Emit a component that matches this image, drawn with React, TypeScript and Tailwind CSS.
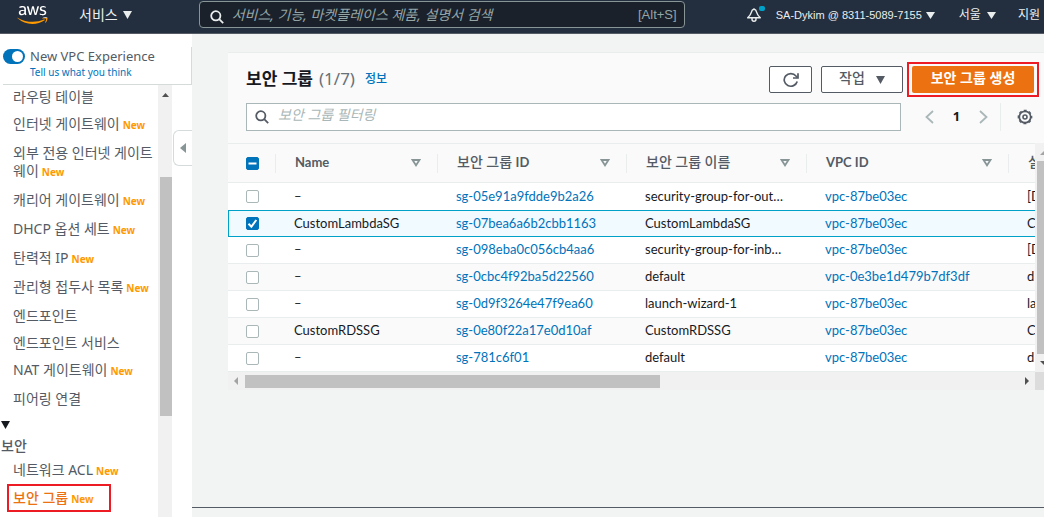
import React from 'react';
import { FaAws } from 'react-icons/fa';

type NavItem = { label: string; isNew?: boolean };

const navItems: NavItem[] = [
  { label: '라우팅 테이블' },
  { label: '인터넷 게이트웨이', isNew: true },
  { label: '외부 전용 인터넷 게이트웨이', isNew: true },
  { label: '캐리어 게이트웨이', isNew: true },
  { label: 'DHCP 옵션 세트', isNew: true },
  { label: '탄력적 IP', isNew: true },
  { label: '관리형 접두사 목록', isNew: true },
  { label: '엔드포인트' },
  { label: '엔드포인트 서비스' },
  { label: 'NAT 게이트웨이', isNew: true },
  { label: '피어링 연결' },
];

const rows = [
  { name: '–', id: 'sg-05e91a9fdde9b2a26', group: 'security-group-for-out…', vpc: 'vpc-87be03ec', desc: '[D' },
  { name: 'CustomLambdaSG', id: 'sg-07bea6a6b2cbb1163', group: 'CustomLambdaSG', vpc: 'vpc-87be03ec', desc: 'C', selected: true },
  { name: '–', id: 'sg-098eba0c056cb4aa6', group: 'security-group-for-inb…', vpc: 'vpc-87be03ec', desc: '[D' },
  { name: '–', id: 'sg-0cbc4f92ba5d22560', group: 'default', vpc: 'vpc-0e3be1d479b7df3df', desc: 'd' },
  { name: '–', id: 'sg-0d9f3264e47f9ea60', group: 'launch-wizard-1', vpc: 'vpc-87be03ec', desc: 'la' },
  { name: 'CustomRDSSG', id: 'sg-0e80f22a17e0d10af', group: 'CustomRDSSG', vpc: 'vpc-87be03ec', desc: 'C' },
  { name: '–', id: 'sg-781c6f01', group: 'default', vpc: 'vpc-87be03ec', desc: 'd' },
];

const columns = [
  { korean: '', latin: 'Name' },
  { korean: '보안 그룹', latin: 'ID' },
  { korean: '보안 그룹 이름', latin: '' },
  { korean: '', latin: 'VPC ID' },
];

function Caret({ className = '' }: { className?: string }) {
  return (
    <svg viewBox="0 0 9 8" preserveAspectRatio="none" className={`shrink-0 ${className}`} aria-hidden="true">
      <path d="M0 0h9L4.5 8z" fill="currentColor" />
    </svg>
  );
}

function SearchIcon({ className = '' }: { className?: string }) {
  return (
    <svg viewBox="0 0 14 14" className={`size-3.5 shrink-0 ${className}`} fill="none" stroke="currentColor" strokeWidth="1.8" aria-hidden="true">
      <circle cx="5.8" cy="5.8" r="4.6" />
      <path d="M9.2 9.2l4 4" />
    </svg>
  );
}

function NewBadge() {
  return <span className="ml-[3px] text-[10px] font-bold leading-none text-[#ff9900]">New</span>;
}

function Header() {
  return (
    <header className="flex h-[34px] shrink-0 items-start border-b border-[#545b64] bg-[#232f3e] pl-[17px] pr-1 text-[#eaeded]">
      <a href="#home" aria-label="AWS" className="mt-[3px]">
        <svg width="0" height="0" className="absolute" aria-hidden="true">
          <linearGradient id="logo" gradientUnits="userSpaceOnUse" x1="0" y1="0" x2="0" y2="512">
            <stop offset="0.645" stopColor="#fff" />
            <stop offset="0.645" stopColor="#ff9900" />
          </linearGradient>
        </svg>
        <FaAws className="h-6 w-[31px]" fill="url(#logo)" />
      </a>
      <button className="ml-[31px] flex h-7 items-center gap-[5px] text-[14px]">
        서비스
        <Caret className="mt-0.5 h-2 w-[9px]" />
      </button>
      <label className="ml-[67px] mt-px flex h-[27px] w-[486px] items-center rounded-sm border border-[#879596] bg-[#1a212b] pl-2.5 pr-[7px]">
        <SearchIcon className="mt-1" />
        <input
          aria-label="검색"
          placeholder="서비스, 기능, 마켓플레이스 제품, 설명서 검색"
          className="ml-2 min-w-0 flex-1 bg-transparent text-[14px] italic outline-none placeholder:text-[#95a5a6]"
        />
        <span className="font-['Liberation_Sans',sans-serif] text-[13px] text-[#95a5a6]">[Alt+S]</span>
      </label>
      <div className="ml-auto flex h-[30px] items-center text-[12px]">
        <button aria-label="알림" className="relative mr-[15px]">
          <svg viewBox="0 0 14 14" className="size-3.5" fill="none" stroke="currentColor" strokeWidth="1.4" strokeLinejoin="round" aria-hidden="true">
            <path d="M7 1C5.500 1.500 4.600 2.700 4.200 4.700 3.800 6.600 2.700 8 .7 9.800h12.600C11.300 8 10.200 6.600 9.800 4.700 9.400 2.700 8.500 1.500 7 1z" />
            <path d="M5 10v1.300q0 1.900 2 1.900t2-1.900V10" />
          </svg>
          <span className="absolute -right-1 -top-0.5 h-[5px] w-1.5 rounded-xs bg-[#00a1c9]" />
        </button>
        <button className="mr-6 flex items-center gap-1 whitespace-nowrap font-['Liberation_Sans',sans-serif] text-[11px]">
          SA-Dykim @ 8311-5089-7155
          <Caret className="h-[7px] w-[9px]" />
        </button>
        <button className="mr-[22px] flex items-center gap-1.5 whitespace-nowrap">
          서울
          <Caret className="h-[7px] w-[9px]" />
        </button>
        <button className="whitespace-nowrap">지원</button>
      </div>
    </header>
  );
}

function Sidebar() {
  return (
    <aside className="flex w-48 shrink-0 flex-col bg-white pt-[13px] text-[#545b64]">
      <div className="ml-[3px] flex h-[38px] shrink-0 gap-[5px] border-b border-r border-[#d5dbdb]">
        <label className="relative mt-0.5 h-[15px] w-[22px] shrink-0 rounded-full bg-[#0073bb]">
          <input type="checkbox" role="switch" defaultChecked aria-label="New VPC Experience" className="absolute inset-0 opacity-0" />
          <span className="absolute right-0.5 top-0.5 size-[11px] rounded-full bg-white" />
        </label>
        <div className="whitespace-nowrap">
          <div className="text-[13px] leading-[18px]">New VPC Experience</div>
          <a href="#feedback" className="block text-[10px] leading-[14px] text-[#0073bb]">Tell us what you think</a>
        </div>
      </div>
      <div className="flex min-h-0 flex-1">
        <nav className="w-[158px] overflow-hidden break-all text-[14px] leading-[18px]">
          <ul className="pl-[13px] pt-[3px]">
            {navItems.map((item) => (
              <li key={item.label} className={item.isNew ? 'mb-[11px]' : 'mb-[9px]'}>
                <a href="#nav">{item.label}{item.isNew && <NewBadge />}</a>
              </li>
            ))}
          </ul>
          <button className="block w-full pl-px text-left font-medium" aria-expanded="true">
            <Caret className="mb-2 mt-1 h-2 w-[9px] text-[#16191f]" />
            <span className="mb-1.5 block">보안</span>
          </button>
          <ul className="pl-[13px]">
            <li className="mb-2.5"><a href="#acl">네트워크 ACL<NewBadge /></a></li>
            <li>
              <a href="#sg" aria-current="page" className="relative block w-[92px] font-medium text-[#ec7211]">
                보안 그룹<NewBadge />
                <span className="absolute -inset-x-1.5 -inset-y-[5px] border-2 border-[#ed1c24]" />
              </a>
            </li>
          </ul>
        </nav>
        <div className="w-3.5 bg-[#f1f1f1]">
          <Caret className="mx-auto mt-2 h-1 w-[7px] rotate-180 text-[#505050]" />
          <div className="ml-0.5 mt-20 h-[239px] bg-[#c1c1c1]" />
        </div>
        <button aria-label="탐색 닫기" className="ml-px mt-[45px] flex h-9 flex-1 items-center rounded-l-md border border-r-0 border-[#d5dbdb] pl-1.5">
          <svg viewBox="0 0 6 10" className="h-2.5 w-1.5 text-[#879596]"><path d="M6 0v10L0 5z" fill="currentColor" /></svg>
        </button>
      </div>
    </aside>
  );
}

function Toolbar() {
  return (
    <div className="bg-[#fafafa] pl-[18px] pr-2.5 pt-[13px]">
      <div className="flex h-[27px] items-center">
        <h1 className="flex items-center whitespace-nowrap pb-0.5 text-[17px] font-bold leading-6 text-[#16191f]">
          보안 그룹
          <span className="ml-1.5 font-normal text-[#687078]">(1/7)</span>
          <a href="#info" className="ml-2.5 text-[12px] font-medium text-[#0073bb]">정보</a>
        </h1>
        <button aria-label="새로 고침" className="ml-auto flex h-[27px] w-[43px] items-center justify-center rounded-xs border border-[#545b64] bg-white text-[#545b64]">
          <svg viewBox="0 0 16 16" className="size-4" fill="none" stroke="currentColor" strokeWidth="1.700">
            <path d="M14.200 9.500A6.600 6.300 0 1 1 13 4L14.500 5.700" />
            <path d="M15 1.200V6H10" />
          </svg>
        </button>
        <button className="ml-[9px] flex h-[27px] w-[82px] items-center justify-center gap-[11px] rounded-xs border border-[#545b64] bg-white pb-1 text-[14px] font-medium text-[#545b64]">
          작업
          <Caret className="mt-1 h-2 w-[9px]" />
        </button>
        <button className="relative ml-[9px] h-[27px] w-[122px] rounded-xs bg-[#ec7211] pb-1 text-[14px] font-bold leading-[22px] text-white">
          보안 그룹 생성
          <span className="absolute -inset-x-[5px] -inset-y-1 border-2 border-[#ed1c24]" />
        </button>
      </div>
      <div className="flex items-center pb-3 pr-px pt-2.5">
        <label className="flex h-7 flex-1 items-center gap-[9px] border border-[#aab7b8] bg-white pl-2">
          <SearchIcon className="text-[#545b64]" />
          <input aria-label="보안 그룹 필터링" placeholder="보안 그룹 필터링" className="min-w-0 flex-1 pb-1 text-[14px] italic leading-5 outline-none placeholder:text-[#aab7b8]" />
        </label>
        <button aria-label="이전 페이지" className="ml-6 text-[#aab7b8]">
          <svg viewBox="0 0 9 14" className="h-3.5 w-[9px]" fill="none" stroke="currentColor" strokeWidth="1.800"><path d="M8 1L1.500 7 8 13" /></svg>
        </button>
        <button className="w-[45px] text-center text-[13px] font-bold text-[#16191f]">1</button>
        <button aria-label="다음 페이지" className="text-[#aab7b8]">
          <svg viewBox="0 0 9 14" className="h-3.5 w-[9px]" fill="none" stroke="currentColor" strokeWidth="1.800"><path d="M1 1l6.500 6L1 13" /></svg>
        </button>
        <span className="ml-3 h-7 w-px bg-[#eaeded]" />
        <button aria-label="설정" className="ml-4 text-[#545b64]">
          <svg viewBox="0 0 16 16" className="size-4" fill="none" stroke="currentColor">
            <circle cx="8" cy="8" r="5.700" strokeWidth="1.700" />
            <circle cx="8" cy="8" r="2" strokeWidth="1.600" />
            <circle cx="8" cy="8" r="6.700" strokeWidth="1.300" strokeDasharray="2.900 2.362" strokeDashoffset="1.450" />
          </svg>
        </button>
      </div>
    </div>
  );
}

function Checkbox({ state, label }: { state: 'on' | 'off' | 'mixed'; label: string }) {
  return (
    <span className="relative block size-[13px]">
      <input
        type="checkbox"
        aria-label={label}
        defaultChecked={state === 'on'}
        className={`block size-[13px] appearance-none rounded-xs border ${state === 'off' ? 'border-[#aab7b8] bg-white' : 'border-[#0073bb] bg-[#0073bb]'}`}
      />
      {state !== 'off' && (
        <svg viewBox="0 0 13 13" className="pointer-events-none absolute inset-0 size-[13px]" fill="none" stroke="#fff" strokeWidth="2">
          <path d={state === 'on' ? 'M2.500 6.700l2.900 2.900L10.300 3' : 'M2.500 6.500h8'} />
        </svg>
      )}
    </span>
  );
}

function SecurityGroupTable() {
  return (
    <table className="w-full table-fixed border-separate border-spacing-0 whitespace-nowrap text-left font-['Lato','Noto_Sans_CJK_KR',sans-serif] text-[13px] leading-5">
      <colgroup>
        <col className="w-[48px]" />
        <col className="w-[162px]" />
        <col className="w-[189px]" />
        <col className="w-[180px]" />
        <col className="w-[202px]" />
        <col />
      </colgroup>
      <thead>
        <tr className="h-[40px] bg-[#fafafa] text-[#545b64]">
          <th className="border-y border-[#eaeded] p-0">
            <div className="flex h-[19px] items-center border-r border-[#eaeded] pl-[18px]"><Checkbox state="mixed" label="모두 선택" /></div>
          </th>
          {columns.map((c) => (
            <th key={c.korean + c.latin} className="border-y border-[#eaeded] p-0">
              <div className="flex h-[19px] items-center justify-between border-r border-[#eaeded] pl-[19px] pr-4">
                <span className="pb-0.5">
                  {c.korean && <span className="text-[14px] font-medium">{c.korean} </span>}
                  {c.latin}
                </span>
                <svg viewBox="0 0 10 8" className="h-2 w-2.5" fill="none" stroke="#879596" strokeWidth="1.800"><path d="M1.500 1h7L5 6.300z" /></svg>
              </div>
            </th>
          ))}
          <th className="overflow-hidden border-y border-[#eaeded] p-0 pb-0.5 pl-[19px] text-[14px] font-medium">설</th>
        </tr>
      </thead>
      <tbody>
        {rows.map((r, i) => {
          const cell = `overflow-hidden p-0 pl-[18px] ${r.selected ? 'border-y border-[#00a1c9]' : i === 0 ? '' : 'border-b border-[#eaeded]'}`;
          const textCell = `${cell} pb-0.5`;
          return (
            <tr key={r.id} className={`h-[27px] text-[#16191f] ${r.selected ? 'bg-[#f1faff]' : i % 2 ? 'bg-[#fafafa]' : 'bg-white'}`}>
              <td className={r.selected ? 'border-y border-l border-[#00a1c9] p-0 pl-[17px]' : cell}><Checkbox state={r.selected ? 'on' : 'off'} label={r.id} /></td>
              <td className={textCell}>{r.name}</td>
              <td className={textCell}><a href="#sg-detail" className="text-[#0073bb]">{r.id}</a></td>
              <td className={textCell}>{r.group}</td>
              <td className={textCell}><a href="#vpc-detail" className="text-[#0073bb]">{r.vpc}</a></td>
              <td className={textCell}>{r.desc}</td>
            </tr>
          );
        })}
      </tbody>
    </table>
  );
}

export default function App() {
  return (
    <div className="flex h-screen flex-col overflow-hidden bg-[#f2f3f3] font-['Noto_Sans','Noto_Sans_CJK_KR',sans-serif]">
      <Header />
      <div className="flex min-h-0 flex-1">
        <Sidebar />
        <main className="flex min-w-0 flex-1 flex-col">
          <div className="min-h-0 flex-1 overflow-hidden pl-9 pt-[18px]">
            <section className="border-t border-[#eaeded]">
              <Toolbar />
              <div className="flex">
                <div className="min-w-0 flex-1">
                  <SecurityGroupTable />
                  <div className="flex h-[18px] items-center bg-[#f1f1f1] px-1.5">
                    <svg viewBox="0 0 4 8" className="h-2 w-1"><path d="M4 0v8L0 4z" fill="#a3a3a3" /></svg>
                    <div className="ml-[7px] h-[13px] w-[415px] bg-[#c1c1c1]" />
                    <svg viewBox="0 0 4 8" className="ml-auto h-2 w-1"><path d="M0 0v8l4-4z" fill="#505050" /></svg>
                  </div>
                </div>
                <div className="flex w-[9px] flex-col overflow-hidden bg-[#f1f1f1]">
                  <Caret className="ml-[5px] mt-2 h-1 w-2 rotate-180 text-[#a3a3a3]" />
                  <div className="ml-0.5 mt-1.5 flex-1 bg-[#c1c1c1]" />
                  <Caret className="my-[7px] ml-[5px] h-1 w-2 text-[#505050]" />
                  <div className="h-[18px] bg-[#dcdcdc]" />
                </div>
              </div>
            </section>
          </div>
          <div className="h-2.5 shrink-0 border-t border-[#545b64]" />
        </main>
      </div>
    </div>
  );
}
